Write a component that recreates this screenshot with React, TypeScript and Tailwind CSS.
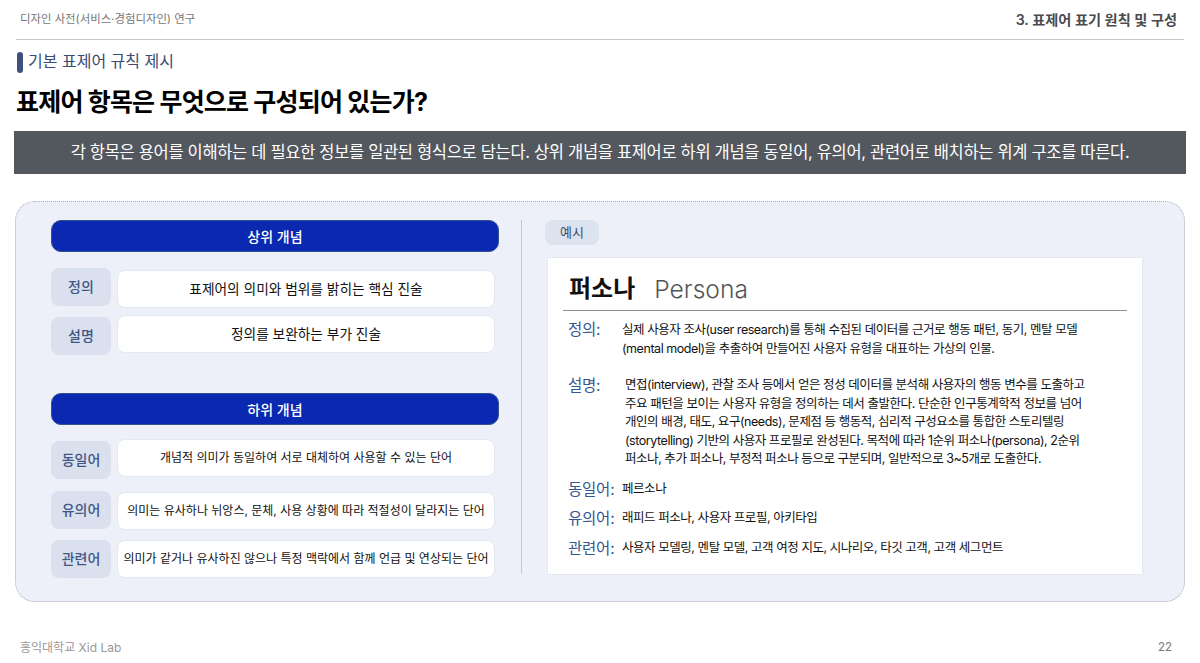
import type { ReactNode } from "react";

function ConceptHeader({ title, className }: { title: string; className: string }) {
  return (
    <div className={`h-8 w-[448px] rounded-[10px] bg-[#0a28b0] border border-[#33508f] flex items-center justify-center text-white text-[14px] font-medium ${className}`}>
      {title}
    </div>
  );
}

function Row({ label, text, size, labelClass, boxClass, className }: { label: string; text: string; size: string; labelClass: string; boxClass: string; className: string }) {
  return (
    <div className={`flex items-start ${className}`}>
      <div className={`w-[60px] h-[38px] shrink-0 rounded-lg bg-[#dbe0ef] flex items-center justify-center pb-[2px] text-[14px] font-medium text-[#3f5785] ${labelClass}`}>
        {label}
      </div>
      <div className={`ml-[6px] w-[378px] h-[38px] rounded-lg bg-white border border-[#e4e8f2] flex items-center justify-center whitespace-nowrap text-[#111] ${size} ${boxClass}`}>
        {text}
      </div>
    </div>
  );
}

function Term({ label, className, textClass, children }: { label: string; className: string; textClass: string; children: ReactNode }) {
  return (
    <div className={`flex items-start pl-[5px] ${className}`}>
      <div className="w-[54px] shrink-0 text-[15.5px] leading-[20px] tracking-[-0.2px] text-[#35578f] whitespace-nowrap">{label}</div>
      <div className={`text-[12.5px] leading-[18.5px] tracking-[-0.45px] text-[#111] whitespace-nowrap ${textClass}`}>{children}</div>
    </div>
  );
}

export default function App() {
  return (
    <div className="w-[1200px] h-[663px] bg-white overflow-hidden [font-family:Inter,'Noto_Sans_CJK_KR',sans-serif]">
      <header className="mx-4 h-10 border-b border-[#c4c4c8] flex items-center justify-between pl-[4px] pr-[7px]">
        <span className="text-[11.4px] text-[#777]">디자인 사전(서비스·경험디자인) 연구</span>
        <span className="text-[14.2px] font-semibold text-[#4a4a4f]">3. 표제어 표기 원칙 및 구성</span>
      </header>

      <div className="ml-[17px] mt-3 flex items-center h-[21px]">
        <div className="w-[6px] h-[21px] rounded-full bg-[#3f4f7e]" />
        <span className="ml-[5px] pb-[3px] text-[16px] text-[#3c4a70]">기본 표제어 규칙 제시</span>
      </div>

      <h1 className="ml-4 mt-[12px] text-[25px] leading-[34px] tracking-[-0.8px] font-bold text-black">표제어 항목은 무엇으로 구성되어 있는가?</h1>

      <div className="ml-[14px] mt-[12px] w-[1172px] h-[43px] bg-[#53575e] flex items-center justify-center text-white text-[16.5px] tracking-[-0.33px]">
        각 항목은 용어를 이해하는 데 필요한 정보를 일관된 형식으로 담는다. 상위 개념을 표제어로 하위 개념을 동일어, 유의어, 관련어로 배치하는 위계 구조를 따른다.
      </div>

      <main className="ml-[15px] mt-[27px] w-[1170px] h-[401px] rounded-[20px] bg-[#edf0f8] border border-dotted border-[#a9adb8] flex pt-[18px] pl-[35px]">
        <section className="w-[448px] shrink-0">
          <ConceptHeader title="상위 개념" className="" />
          <Row label="정의" text="표제어의 의미와 범위를 밝히는 핵심 진술" size="text-[13.7px]" labelClass="" boxClass="mt-[2px]" className="mt-4" />
          <Row label="설명" text="정의를 보완하는 부가 진술" size="text-[13.7px]" labelClass="mt-[2px]" boxClass="" className="mt-[7px]" />
          <ConceptHeader title="하위 개념" className="mt-[38px]" />
          <Row label="동일어" text="개념적 의미가 동일하여 서로 대체하여 사용할 수 있는 단어" size="text-[12px]" labelClass="mt-[2px]" boxClass="" className="mt-[14px]" />
          <Row label="유의어" text="의미는 유사하나 뉘앙스, 문체, 사용 상황에 따라 적절성이 달라지는 단어" size="text-[12px]" labelClass="" boxClass="mt-[1px]" className="mt-[12px]" />
          <Row label="관련어" text="의미가 같거나 유사하진 않으나 특정 맥락에서 함께 언급 및 연상되는 단어" size="text-[12px]" labelClass="" boxClass="" className="mt-[10px]" />
        </section>

        <div className="ml-[22px] w-px h-[354px] bg-[#c3c7d1]" />

        <section className="ml-[23px] w-[598px]">
          <div className="w-[54px] h-[25px] rounded-lg bg-[#dde3ee] flex items-center justify-center text-[13px] text-[#3b4a66]">예시</div>
          <div className="ml-[2px] mt-3 w-[596px] h-[318px] bg-white border border-[#e6e9f1] pl-[15px] pt-[13px]">
            <div className="flex items-center h-[36px] pl-[6px]">
              <span className="text-[24px] font-bold text-[#111]">퍼소나</span>
              <span className="ml-[19px] text-[24.6px] font-light text-[#555]">Persona</span>
            </div>
            <div className="mt-[3px] w-[564px] border-t border-[#8d8d92]" />
            <Term label="정의:" className="mt-[9px]" textClass="mt-[1px]">
              실제 사용자 조사(user research)를 통해 수집된 데이터를 근거로 행동 패턴, 동기, 멘탈 모델
              <br />
              (mental model)을 추출하여 만들어진 사용자 유형을 대표하는 가상의 인물.
            </Term>
            <Term label="설명:" className="mt-[18px]" textClass="ml-[3px]">
              면접(interview), 관찰 조사 등에서 얻은 정성 데이터를 분석해 사용자의 행동 변수를 도출하고
              <br />
              주요 패턴을 보이는 사용자 유형을 정의하는 데서 출발한다. 단순한 인구통계학적 정보를 넘어
              <br />
              개인의 배경, 태도, 요구(needs), 문제점 등 행동적, 심리적 구성요소를 통합한 스토리텔링
              <br />
              (storytelling) 기반의 사용자 프로필로 완성된다. 목적에 따라 1순위 퍼소나(persona), 2순위
              <br />
              퍼소나, 추가 퍼소나, 부정적 퍼소나 등으로 구분되며, 일반적으로 3~5개로 도출한다.
            </Term>
            <Term label="동일어:" className="mt-[11px]" textClass="">페르소나</Term>
            <Term label="유의어:" className="mt-[9px]" textClass="">래피드 퍼소나, 사용자 프로필, 아키타입</Term>
            <Term label="관련어:" className="mt-[10px]" textClass="">사용자 모델링, 멘탈 모델, 고객 여정 지도, 시나리오, 타깃 고객, 고객 세그먼트</Term>
          </div>
        </section>
      </main>

      <footer className="mt-[37px] ml-[20px] mr-[28px] flex items-center justify-between text-[12px] text-[#999]">
        <span>홍익대학교 Xid Lab</span>
        <span className="text-[11.5px] text-[#777]">22</span>
      </footer>
    </div>
  );
}
